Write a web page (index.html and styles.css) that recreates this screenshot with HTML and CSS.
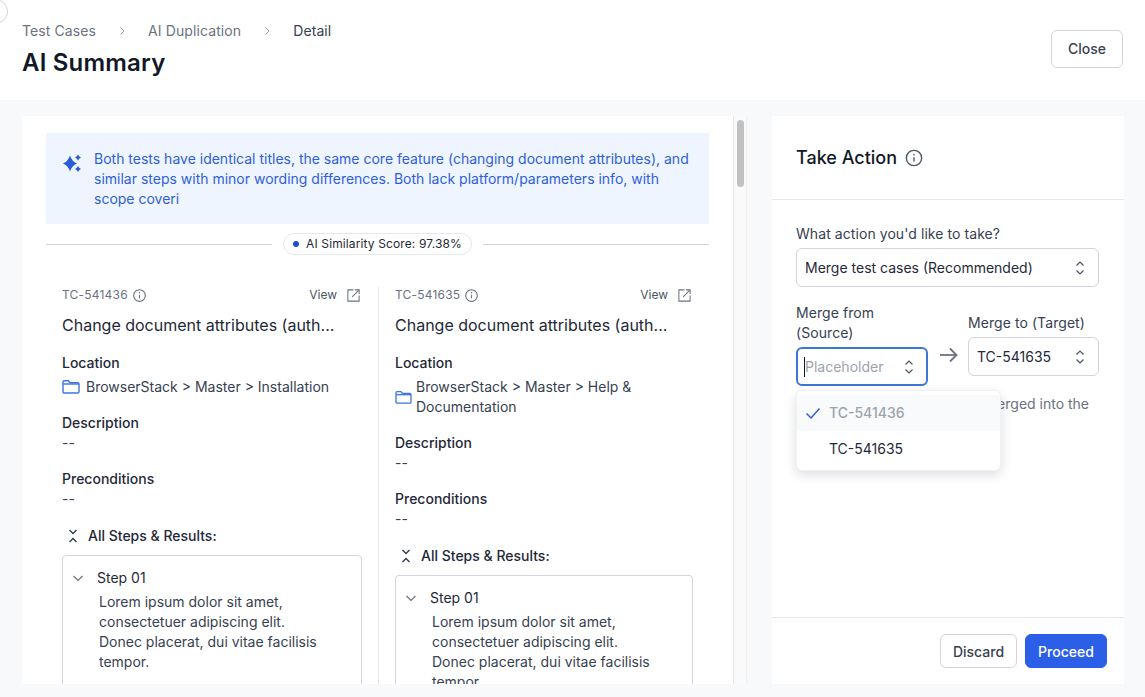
FILE: index.html

```html
<!DOCTYPE html>
<html lang="en">
<head>
  <meta charset="UTF-8">
  <title>AI Summary</title>
  <link rel="stylesheet" href="styles.css">
</head>
<body>
  <div class="corner-dot"></div>

  <!-- Page header -->
  <header class="page-header">
    <div>
      <nav class="crumbs">
        <span>Test Cases</span>
        <svg class="crumb-sep" viewBox="0 0 16 16"><path d="M6.500 4.500 10 8l-3.500 3.500"/></svg>
        <span>AI Duplication</span>
        <svg class="crumb-sep" viewBox="0 0 16 16"><path d="M6.500 4.500 10 8l-3.500 3.500"/></svg>
        <span class="crumb-current">Detail</span>
      </nav>
      <h1>AI Summary</h1>
    </div>
    <button class="btn btn-close">Close</button>
  </header>

  <main class="main">
    <!-- Comparison -->
    <section class="compare-panel">
      <div class="compare-scroll">
        <div class="banner">
          <svg class="sparkle" viewBox="0 0 18 18"><path d="M7 1.500Q9 7.500 14 9.500Q9 11.500 7 17.500Q5 11.500 0 9.500Q5 7.500 7 1.500Z"/><path d="M15 .5Q15.800 2.700 18 3.500Q15.800 4.300 15 6.500Q14.200 4.300 12 3.500Q14.200 2.700 15 .5Z"/><path d="M15 12Q15.800 14.200 18 15Q15.800 15.800 15 18Q14.200 15.800 12 15Q14.200 14.200 15 12Z"/></svg>
          <p>Both tests have identical titles, the same core feature (changing document attributes), and similar steps with minor wording differences. Both lack platform/parameters info, with scope coveri</p>
        </div>

        <div class="score-row">
          <span class="score-line"></span>
          <span class="score-pill"><i class="score-dot"></i>AI Similarity Score: 97.38%</span>
          <span class="score-line"></span>
        </div>

        <div class="columns">
          <article class="case case-first">
            <div class="case-top">
              <span class="case-id">TC-541436
                <svg class="icon-info" viewBox="0 0 16 16"><circle cx="8" cy="8" r="6.200"/><path d="M8 7.300v3.700"/><circle class="info-dot" cx="8" cy="5.100" r=".8"/></svg>
              </span>
              <span class="case-view">View
                <svg class="icon-ext" viewBox="0 0 16 16"><path d="M8 2H2v12h12V8"/><path d="M6.500 9.500 14 2"/><path d="M9.500 2H14v4.500"/></svg>
              </span>
            </div>
            <h2>Change document attributes (auth...</h2>
            <h3>Location</h3>
            <div class="location">
              <svg class="icon-folder" viewBox="0 0 18 16"><path d="M1 3c0-.8.500-1.300 1.300-1.300h4l1.700 2h7.700c.8 0 1.300.5 1.300 1.300v7.700c0 .8-.5 1.300-1.300 1.300H2.300c-.8 0-1.300-.5-1.300-1.300Z"/><path d="M1 5h16"/></svg>
              <span>BrowserStack &gt; Master &gt; Installation</span>
            </div>
            <h3>Description</h3>
            <p class="field-value">--</p>
            <h3>Preconditions</h3>
            <p class="field-value">--</p>
            <div class="steps-title">
              <svg class="icon-collapse" viewBox="0 0 12 16"><path d="M2.500 2 6 5.500 9.500 2"/><path d="M2.500 14 6 10.500 9.500 14"/></svg>
              All Steps &amp; Results:
            </div>
            <div class="step-box">
              <div class="step-head">
                <svg class="icon-chevron" viewBox="0 0 12 12"><path d="M1.500 4 6 8.500 10.500 4"/></svg>
                Step 01
              </div>
              <p class="step-body">Lorem ipsum dolor sit amet, consectetuer adipiscing elit. Donec placerat, dui vitae facilisis tempor.</p>
            </div>
          </article>

          <article class="case">
            <div class="case-top">
              <span class="case-id">TC-541635
                <svg class="icon-info" viewBox="0 0 16 16"><circle cx="8" cy="8" r="6.200"/><path d="M8 7.300v3.700"/><circle class="info-dot" cx="8" cy="5.100" r=".8"/></svg>
              </span>
              <span class="case-view">View
                <svg class="icon-ext" viewBox="0 0 16 16"><path d="M8 2H2v12h12V8"/><path d="M6.500 9.500 14 2"/><path d="M9.500 2H14v4.500"/></svg>
              </span>
            </div>
            <h2>Change document attributes (auth...</h2>
            <h3>Location</h3>
            <div class="location location-wrap">
              <svg class="icon-folder" viewBox="0 0 18 16"><path d="M1 3c0-.8.500-1.300 1.300-1.300h4l1.700 2h7.700c.8 0 1.300.5 1.300 1.300v7.700c0 .8-.5 1.300-1.300 1.300H2.300c-.8 0-1.300-.5-1.300-1.300Z"/><path d="M1 5h16"/></svg>
              <span>BrowserStack &gt; Master &gt; Help &amp; Documentation</span>
            </div>
            <h3>Description</h3>
            <p class="field-value">--</p>
            <h3>Preconditions</h3>
            <p class="field-value">--</p>
            <div class="steps-title">
              <svg class="icon-collapse" viewBox="0 0 12 16"><path d="M2.500 2 6 5.500 9.500 2"/><path d="M2.500 14 6 10.500 9.500 14"/></svg>
              All Steps &amp; Results:
            </div>
            <div class="step-box">
              <div class="step-head">
                <svg class="icon-chevron" viewBox="0 0 12 12"><path d="M1.500 4 6 8.500 10.500 4"/></svg>
                Step 01
              </div>
              <p class="step-body">Lorem ipsum dolor sit amet, consectetuer adipiscing elit. Donec placerat, dui vitae facilisis tempor.</p>
            </div>
          </article>
        </div>
      </div>
      <div class="scroll-track"><div class="scroll-thumb"></div></div>
    </section>

    <!-- Take action -->
    <aside class="action-panel">
      <div class="action-head">
        <h2>Take Action</h2>
        <svg class="icon-info icon-info-lg" viewBox="0 0 16 16"><circle cx="8" cy="8" r="6.800"/><path d="M8 7.300v3.700"/><circle class="info-dot" cx="8" cy="5" r=".8"/></svg>
      </div>
      <div class="action-body">
        <label class="form-label">What action you'd like to take?</label>
        <div class="select">
          <span>Merge test cases (Recommended)</span>
          <svg class="icon-updown" viewBox="0 0 12 18"><path d="M2.500 6.500 6 3l3.500 3.500"/><path d="M2.500 11.500 6 15l3.500-3.500"/></svg>
        </div>

        <div class="merge-row">
          <div class="merge-from">
            <label class="form-label">Merge from (Source)</label>
            <div class="select select-focus">
              <span class="placeholder">Placeholder</span>
              <svg class="icon-updown" viewBox="0 0 12 18"><path d="M2.500 6.500 6 3l3.500 3.500"/><path d="M2.500 11.500 6 15l3.500-3.500"/></svg>
            </div>
          </div>
          <svg class="icon-arrow" viewBox="0 0 18 16"><path d="M0 8h16.500"/><path d="M10 1.500 16.500 8 10 14.500"/></svg>
          <div class="merge-to">
            <label class="form-label">Merge to (Target)</label>
            <div class="select">
              <span>TC-541635</span>
              <svg class="icon-updown" viewBox="0 0 12 18"><path d="M2.500 6.500 6 3l3.500 3.500"/><path d="M2.500 11.500 6 15l3.500-3.500"/></svg>
            </div>
          </div>
        </div>

        <p class="helper">The source test case will be merged into the target test case.</p>

        <ul class="dropdown">
          <li class="option option-selected">
            <svg class="icon-check" viewBox="0 0 16 16"><path d="M1.500 8.500 6 13l8.500-9.500"/></svg>
            TC-541436
          </li>
          <li class="option">TC-541635</li>
        </ul>
      </div>
      <div class="action-foot">
        <button class="btn btn-discard">Discard</button>
        <button class="btn btn-primary">Proceed</button>
      </div>
    </aside>
  </main>
</body>
</html>
```

FILE: styles.css

```css
* {
  box-sizing: border-box;
}
html, body {
  margin: 0;
  height: 697px;
  overflow: hidden;
}
body {
  background-color: #f7f9fb;
  color: #111827;
  font-family: Inter, 'Liberation Sans', sans-serif;
  font-size: 14px;
  line-height: 20px;
  position: relative;
}
h1, h2, h3, p, ul {
  margin: 0;
  padding: 0;
}
svg {
  fill: none;
  stroke: currentColor;
  flex: none;
}
.corner-dot {
  position: absolute;
  left: -17px;
  top: -1px;
  width: 25px;
  height: 25px;
  border: 1px solid #d1d5db;
  border-radius: 50%;
  background-color: #fff;
}

/* header */
.page-header {
  height: 100px;
  background-color: #fff;
  display: flex;
  justify-content: space-between;
  padding: 21px 22px 0;
}
.crumbs {
  display: flex;
  align-items: center;
  color: #6b7280;
  letter-spacing: 0.1px;
}
.crumb-sep {
  width: 16px;
  height: 16px;
  margin: 0 18px;
  stroke: #9ca3af;
  stroke-width: 1;
}
.crumb-current {
  color: #374151;
}
h1 {
  font-size: 24px;
  line-height: 32px;
  font-weight: 600;
  letter-spacing: 0.2px;
  margin-top: 6px;
}
.btn {
  font-family: inherit;
  font-size: 14px;
  font-weight: 500;
  border-radius: 6px;
  border: 1px solid #d1d5db;
  background-color: #fff;
  color: #374151;
  padding: 0;
}
.btn-close {
  width: 72px;
  height: 38px;
  margin-top: 9px;
  padding-bottom: 2px;
}

/* layout */
.main {
  height: 597px;
  display: flex;
  gap: 25px;
  padding: 16px 21px 13px 22px;
}
.compare-panel {
  width: 725px;
  background-color: #fff;
  display: flex;
  overflow: hidden;
}
.compare-scroll {
  flex: 1;
  padding: 17px 24px 0;
  overflow: hidden;
}
.scroll-track {
  width: 14px;
  background-color: #fafafa;
  border-left: 1px solid #e5e7eb;
  border-right: 1px solid #f0f0f0;
  padding: 4px 2px 0 3px;
}
.scroll-thumb {
  height: 67px;
  background-color: #c1c1c1;
  border-radius: 4px;
}

/* banner */
.banner {
  background-color: #eff5ff;
  color: #2f5fd8;
  display: flex;
  gap: 13px;
  padding: 16px 16px 15px 17px;
}
.sparkle {
  width: 18px;
  height: 18px;
  margin-top: 5px;
  fill: #2b5cd6;
  stroke: none;
}

/* similarity score */
.score-row {
  display: flex;
  align-items: center;
  gap: 11px;
  margin-top: 9px;
}
.score-line {
  flex: 1;
  height: 1px;
  background-color: #d1d5db;
}
.score-pill {
  display: flex;
  align-items: center;
  gap: 7px;
  height: 22px;
  padding: 0 9px;
  border: 1px solid #e5e7eb;
  border-radius: 11px;
  font-size: 12px;
  font-weight: 400;
  letter-spacing: 0.12px;
  color: #1f2937;
}
.score-dot {
  width: 6px;
  height: 6px;
  border-radius: 50%;
  background-color: #1d4ed8;
}

/* test case columns */
.columns {
  display: grid;
  grid-template-columns: 333px 330px;
  margin-top: 32px;
}
.case {
  padding: 0 16px;
  min-width: 0;
}
.case-first {
  border-right: 1px solid #e5e7eb;
}
.case-top {
  display: flex;
  justify-content: space-between;
  align-items: center;
  height: 16px;
  font-size: 12px;
  color: #6b7280;
}
.case-id {
  display: flex;
  align-items: center;
  gap: 4px;
  letter-spacing: 0.2px;
}
.case-view {
  display: flex;
  align-items: center;
  gap: 9px;
  margin-right: 1px;
  color: #4b5563;
}
.icon-info {
  width: 15px;
  height: 15px;
  stroke: #6b7280;
  stroke-width: 1.200;
}
.info-dot {
  fill: #6b7280;
  stroke: none;
}
.icon-ext {
  width: 15px;
  height: 15px;
  stroke: #6b7280;
  stroke-width: 1.100;
}
.case h2 {
  font-size: 16px;
  line-height: 24px;
  font-weight: 400;
  color: #1f2937;
  margin-top: 10px;
  white-space: nowrap;
}
.case h3 {
  font-size: 14px;
  line-height: 20px;
  font-weight: 500;
  color: #1f2937;
  margin-top: 16px;
}
.location {
  display: flex;
  align-items: center;
  gap: 6px;
  margin-top: 4px;
  color: #374151;
}
.location-wrap {
  gap: 4px;
  padding-right: 50px;
}
.location-wrap .icon-folder {
  width: 17px;
  height: 15px;
}
.icon-folder {
  width: 18px;
  height: 16px;
  stroke: #3b76e0;
  stroke-width: 1.400;
}
.field-value {
  color: #374151;
}
.steps-title {
  display: flex;
  align-items: center;
  gap: 9px;
  margin-top: 17px;
  padding-left: 5px;
  color: #1f2937;
  font-weight: 450;
}
.icon-collapse {
  width: 12px;
  height: 16px;
  stroke: #374151;
  stroke-width: 1.500;
}
.step-box {
  margin-top: 9px;
  height: 200px;
  border: 1px solid #d1d5db;
  border-radius: 4px;
  padding: 12px 18px 0 9px;
}
.step-head {
  display: flex;
  align-items: center;
  gap: 13px;
  color: #1f2937;
}
.icon-chevron {
  width: 12px;
  height: 12px;
  stroke: #6b7280;
  stroke-width: 1.200;
}
.step-body {
  width: 225px;
  margin: 4px 0 0 27px;
  color: #374151;
}

/* take action */
.action-panel {
  width: 352px;
  background-color: #fff;
  display: flex;
  flex-direction: column;
}
.action-head {
  height: 84px;
  display: flex;
  align-items: center;
  gap: 8px;
  padding: 0 24px;
  border-bottom: 1px solid #e5e7eb;
}
.action-head h2 {
  font-size: 18px;
  line-height: 28px;
  font-weight: 500;
  color: #111827;
}
.icon-info-lg {
  width: 18px;
  height: 18px;
  stroke: #4b5563;
}
.action-body {
  flex: 1;
  padding: 24px 25px 0 24px;
  position: relative;
}
.form-label {
  display: block;
  color: #374151;
  letter-spacing: 0.07px;
}
.select {
  height: 39px;
  margin-top: 4px;
  display: flex;
  align-items: center;
  justify-content: space-between;
  padding: 0 12px 0 8px;
  border: 1px solid #d1d5db;
  border-radius: 6px;
  color: #1f2937;
}
.icon-updown {
  width: 12px;
  height: 18px;
  stroke: #4b5563;
  stroke-width: 1.200;
}
.merge-row {
  display: flex;
  align-items: center;
  margin-top: 16px;
}
.merge-from {
  width: 132px;
}
.merge-to {
  width: 131px;
  margin-left: 10px;
}
.select-focus {
  border: 2px solid #3b76d8;
  padding: 0 11px 0 6px;
}
.placeholder {
  color: #9ca3af;
  border-left: 1px solid #111827;
}
.icon-arrow {
  width: 18px;
  height: 16px;
  margin: 21px 0 0 12px;
  stroke: #6b7280;
  stroke-width: 1.800;
}
.helper {
  margin-top: 8px;
  color: #6b7280;
}
.dropdown {
  position: absolute;
  left: 24px;
  top: 190px;
  width: 205px;
  height: 81px;
  list-style: none;
  padding: 4px 0;
  background-color: #fff;
  border: 1px solid #f0f1f3;
  border-radius: 6px;
  box-shadow: 0 4px 12px rgba(17, 24, 39, 0.14);
}
.option {
  height: 36px;
  display: flex;
  align-items: center;
  padding-left: 32px;
  color: #1f2937;
}
.option-selected {
  position: relative;
  background-color: #f9fafb;
  color: #9ca3af;
  font-weight: 500;
}
.icon-check {
  position: absolute;
  left: 8px;
  top: 10px;
  width: 16px;
  height: 16px;
  stroke: #2f5fd8;
  stroke-width: 1.500;
}
.action-foot {
  height: 67px;
  display: flex;
  justify-content: flex-end;
  gap: 8px;
  padding: 16px 17px 0 0;
  border-top: 1px solid #e5e7eb;
}
.action-foot .btn {
  height: 34px;
}
.btn-discard {
  width: 77px;
}
.btn-primary {
  width: 82px;
  background-color: #2c5fe8;
  border-color: #2c5fe8;
  color: #fff;
}
```
